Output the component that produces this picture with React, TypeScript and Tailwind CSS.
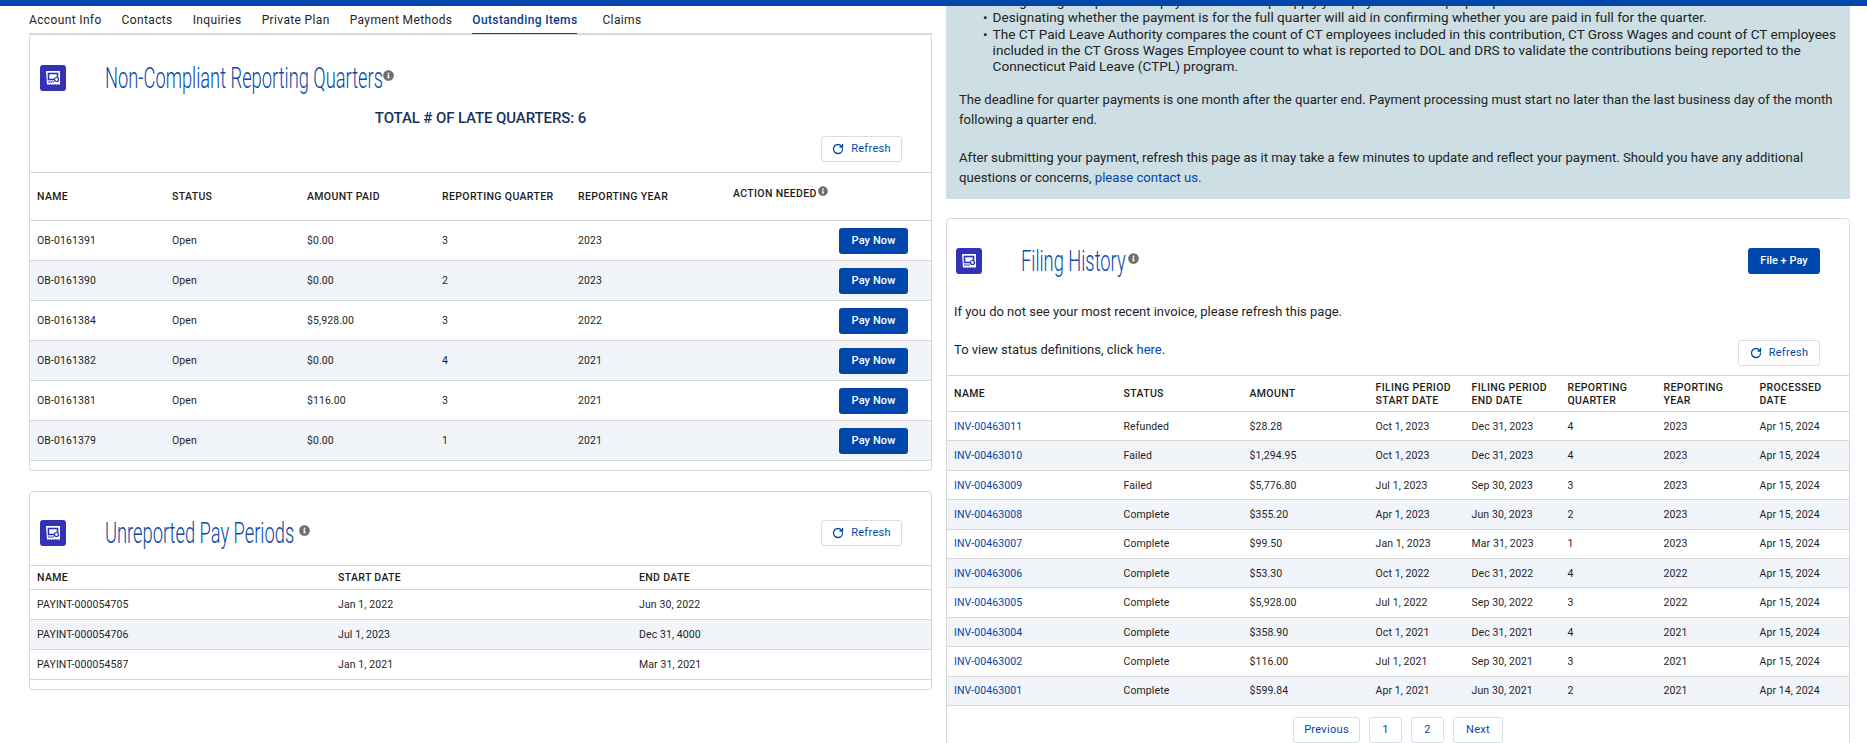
import { RotateCw } from "lucide-react";
import { FaInfoCircle } from "react-icons/fa";

const tabs = ["Account Info", "Contacts", "Inquiries", "Private Plan", "Payment Methods"];

const lateQuarters = [
  ["OB-0161391", "Open", "$0.00", "3", "2023"],
  ["OB-0161390", "Open", "$0.00", "2", "2023"],
  ["OB-0161384", "Open", "$5,928.00", "3", "2022"],
  ["OB-0161382", "Open", "$0.00", "4", "2021"],
  ["OB-0161381", "Open", "$116.00", "3", "2021"],
  ["OB-0161379", "Open", "$0.00", "1", "2021"],
];

const payPeriods = [
  ["PAYINT-000054705", "Jan 1, 2022", "Jun 30, 2022"],
  ["PAYINT-000054706", "Jul 1, 2023", "Dec 31, 4000"],
  ["PAYINT-000054587", "Jan 1, 2021", "Mar 31, 2021"],
];

const invoices = [
  ["INV-00463011", "Refunded", "$28.28", "Oct 1, 2023", "Dec 31, 2023", "4", "2023", "Apr 15, 2024"],
  ["INV-00463010", "Failed", "$1,294.95", "Oct 1, 2023", "Dec 31, 2023", "4", "2023", "Apr 15, 2024"],
  ["INV-00463009", "Failed", "$5,776.80", "Jul 1, 2023", "Sep 30, 2023", "3", "2023", "Apr 15, 2024"],
  ["INV-00463008", "Complete", "$355.20", "Apr 1, 2023", "Jun 30, 2023", "2", "2023", "Apr 15, 2024"],
  ["INV-00463007", "Complete", "$99.50", "Jan 1, 2023", "Mar 31, 2023", "1", "2023", "Apr 15, 2024"],
  ["INV-00463006", "Complete", "$53.30", "Oct 1, 2022", "Dec 31, 2022", "4", "2022", "Apr 15, 2024"],
  ["INV-00463005", "Complete", "$5,928.00", "Jul 1, 2022", "Sep 30, 2022", "3", "2022", "Apr 15, 2024"],
  ["INV-00463004", "Complete", "$358.90", "Oct 1, 2021", "Dec 31, 2021", "4", "2021", "Apr 15, 2024"],
  ["INV-00463002", "Complete", "$116.00", "Jul 1, 2021", "Sep 30, 2021", "3", "2021", "Apr 15, 2024"],
  ["INV-00463001", "Complete", "$599.84", "Apr 1, 2021", "Jun 30, 2021", "2", "2021", "Apr 14, 2024"],
];

const CardIcon = () => (
  <svg width="26" height="26" viewBox="0 0 26 26" className="shrink-0">
    <rect width="26" height="26" rx="3" fill="#3232b4" />
    <path
      d="M6 6h14v13l-1.2 1-1.2-1-1.2 1-1.2-1-1.2 1-1.2-1-1.2 1-1.2-1-1.2 1-1.2-1-1 1z"
      fill="#fff"
    />
    <rect x="8.5" y="8.5" width="9" height="6" fill="none" stroke="#3232b4" strokeWidth="1.6" />
    <circle cx="16.5" cy="14.5" r="2" fill="#fff" stroke="#3232b4" strokeWidth="1.2" />
    <path d="M8 17h6" stroke="#3232b4" strokeWidth="1" />
  </svg>
);

const Info = ({ size = 11 }: { size?: number }) => (
  <FaInfoCircle size={size} className="shrink-0 text-[#706e6b]" />
);

const Title = ({ text, widthClass }: { text: string; widthClass: string }) => (
  <div className="flex items-start">
    <div className={`${widthClass} h-[34px] overflow-visible`}>
      <h2 className="origin-left scale-x-[0.61] whitespace-nowrap font-['Roboto'] text-[30px] leading-[34px] font-light text-[#0b4aa8]">
        {text}
      </h2>
    </div>
    <span className="mt-[9px] ml-[2px]">
      <Info />
    </span>
  </div>
);

const RefreshButton = () => (
  <button className="flex h-[26px] w-[81px] items-center justify-center gap-[7px] rounded-[3px] border border-[#d8dde6] bg-white text-[11px] tracking-[0.3px] text-[#0047ab]">
    <RotateCw size={12} strokeWidth={2.6} />
    Refresh
  </button>
);

const PageButton = ({ label, widthClass }: { label: string; widthClass: string }) => (
  <button className={`${widthClass} h-[26px] rounded-[3px] border border-[#d8dde6] bg-white text-[11px] tracking-[0.3px] text-[#0047ab]`}>
    {label}
  </button>
);

const headCell = "text-[10.5px] font-medium tracking-[0.35px] uppercase text-[#1c1c1c]";

export default function App() {
  return (
    <div className="h-[743px] w-[1867px] overflow-hidden bg-white font-['Roboto',sans-serif] text-[#1f1f1f]">
      <div className="relative z-10 h-[6px] bg-[#0047ab]" />
      <div className="flex items-start pl-[29px]">
        {/* left column */}
        <div className="w-[903px] shrink-0">
          <div className="flex h-[29px] border-b-2 border-[#d8d8d8] text-[12px] tracking-[0.36px]">
            {tabs.map((tab) => (
              <div key={tab} className="mr-[20px] flex h-[28px] items-center text-[#1f1f1f]">
                {tab}
              </div>
            ))}
            <div className="mr-[25px] flex h-[28px] items-center border-b border-[#0047ab] font-medium text-[#0a3a8c]">
              Outstanding Items
            </div>
            <div className="flex h-[28px] items-center">Claims</div>
          </div>

          <section className="rounded-[4px] border border-t-0 border-[#d8d8d8] pb-[9px]">
            <div className="flex items-center pt-[26px] pl-[10px]">
              <CardIcon />
              <div className="ml-[39px]">
                <Title text="Non-Compliant Reporting Quarters" widthClass="w-[276px]" />
              </div>
            </div>
            <p className="mt-[13px] text-center text-[15px] leading-[20px] font-medium tracking-[-0.1px] text-[#16325c]">
              TOTAL # OF LATE QUARTERS: 6
            </p>
            <div className="mt-[8px] mb-[10px] flex justify-end pr-[29px]">
              <RefreshButton />
            </div>
            <div className="grid h-[49px] grid-cols-[135px_135px_135px_136px_155px_1fr] items-center border-y border-[#d8d8d8] pl-[7px]">
              <span className={headCell}>Name</span>
              <span className={headCell}>Status</span>
              <span className={headCell}>Amount Paid</span>
              <span className={headCell}>Reporting Quarter</span>
              <span className={headCell}>Reporting Year</span>
              <span className={`${headCell} -mt-[6px] flex items-start gap-[1px]`}>
                Action Needed
                <Info size={10} />
              </span>
            </div>
            {lateQuarters.map((row, idx) => (
              <div
                key={row[0]}
                className={`grid h-[40px] grid-cols-[135px_135px_135px_136px_1fr_69px] items-center border-b border-[#d8d8d8] pt-px pr-[23px] pl-[7px] text-[10.5px] tracking-[0.1px] ${idx % 2 === 1 ? "bg-[#f1f4f9]" : "bg-white"}`}
              >
                {row.map((cell, i) => (
                  <span key={i}>{cell}</span>
                ))}
                <button className="h-[26px] rounded-[3px] bg-[#0047ab] text-[11px] font-medium text-white">
                  Pay Now
                </button>
              </div>
            ))}
          </section>

          <section className="mt-[20px] rounded-[4px] border border-[#d8d8d8] pb-[9px]">
            <div className="flex items-center justify-between pt-[24px] pr-[29px] pb-[15px] pl-[10px]">
              <div className="flex items-center">
                <CardIcon />
                <div className="ml-[39px]">
                  <Title text="Unreported Pay Periods" widthClass="w-[192px]" />
                </div>
              </div>
              <RefreshButton />
            </div>
            <div className="grid h-[25px] grid-cols-[301px_301px_1fr] items-center border-y border-[#d8d8d8] pl-[7px]">
              <span className={headCell}>Name</span>
              <span className={headCell}>Start Date</span>
              <span className={headCell}>End Date</span>
            </div>
            {payPeriods.map((row, idx) => (
              <div
                key={row[0]}
                className={`grid h-[30px] grid-cols-[301px_301px_1fr] items-center border-b border-[#d8d8d8] pl-[7px] text-[10.5px] tracking-[0.1px] ${idx === 1 ? "bg-[#f1f4f9]" : "bg-white"}`}
              >
                {row.map((cell, i) => (
                  <span key={i}>{cell}</span>
                ))}
              </div>
            ))}
          </section>
        </div>

        {/* right column */}
        <div className="ml-[14px] w-[904px] shrink-0">
          <div className="-mt-[13px] h-[206px] bg-[#cddfe4] px-[13px] text-[#232323]">
            <ul className="pl-[24px] text-[13.6px] leading-[16.3px]">
              <li className="flex gap-[5px]">
                <span>•</span>
                <span>Designating the quarter the payment is for helps apply your payment to the proper quarter.</span>
              </li>
              <li className="flex gap-[5px]">
                <span>•</span>
                <span>Designating whether the payment is for the full quarter will aid in confirming whether you are paid in full for the quarter.</span>
              </li>
              <li className="flex gap-[5px]">
                <span>•</span>
                <span>
                  The CT Paid Leave Authority compares the count of CT employees included in this contribution, CT Gross Wages and count of CT employees
                  included in the CT Gross Wages Employee count to what is reported to DOL and DRS to validate the contributions being reported to the
                  Connecticut Paid Leave (CTPL) program.
                </span>
              </li>
            </ul>
            <p className="mt-[16px] text-[13.15px] leading-[19.5px]">
              The deadline for quarter payments is one month after the quarter end. Payment processing must start no later than the last business day of the month
              following a quarter end.
            </p>
            <p className="mt-[19px] text-[13.15px] leading-[19.5px]">
              After submitting your payment, refresh this page as it may take a few minutes to update and reflect your payment. Should you have any additional
              questions or concerns, <span className="text-[#0047ab]">please contact us.</span>
            </p>
          </div>

          <section className="mt-[19px] rounded-[4px] border border-[#d8d8d8] pb-[11px]">
            <div className="flex items-center justify-between pt-[25px] pr-[29px] pl-[9px]">
              <div className="flex items-center">
                <CardIcon />
                <div className="ml-[39px]">
                  <Title text="Filing History" widthClass="w-[105px]" />
                </div>
              </div>
              <button className="h-[26px] w-[72px] rounded-[3px] bg-[#0047ab] text-[11px] font-medium text-white">
                File + Pay
              </button>
            </div>
            <p className="mt-[24px] pl-[7px] text-[13px] leading-[20px]">
              If you do not see your most recent invoice, please refresh this page.
            </p>
            <div className="mt-[18px] mb-[9px] flex items-start justify-between pr-[29px] pl-[7px]">
              <p className="text-[13px] leading-[20px]">
                To view status definitions, click <span className="text-[#0047ab]">here</span>.
              </p>
              <button className="flex h-[26px] w-[82px] items-center justify-center gap-[7px] rounded-[3px] border border-[#d8dde6] bg-white text-[11px] tracking-[0.3px] text-[#0047ab]">
                <RotateCw size={12} strokeWidth={2.6} />
                Refresh
              </button>
            </div>
            <div className="grid h-[37px] grid-cols-[169.5px_126px_126px_96px_96px_96px_96px_1fr] items-center border-y border-[#d8d8d8] pl-[7px] leading-[13px]">
              <span className={headCell}>Name</span>
              <span className={headCell}>Status</span>
              <span className={headCell}>Amount</span>
              <span className={headCell}>Filing Period<br />Start Date</span>
              <span className={headCell}>Filing Period<br />End Date</span>
              <span className={headCell}>Reporting<br />Quarter</span>
              <span className={headCell}>Reporting<br />Year</span>
              <span className={headCell}>Processed<br />Date</span>
            </div>
            {invoices.map((row, idx) => (
              <div
                key={row[0]}
                className={`grid h-[29.4px] grid-cols-[169.5px_126px_126px_96px_96px_96px_96px_1fr] items-center border-b border-[#d8d8d8] pt-px pl-[7px] text-[10.5px] tracking-[0.1px] ${idx % 2 === 1 ? "bg-[#f1f4f9]" : "bg-white"}`}
              >
                {row.map((cell, i) => (
                  <span key={i} className={i === 0 ? "text-[#0047ab]" : ""}>
                    {cell}
                  </span>
                ))}
              </div>
            ))}
            <div className="mt-[11px] flex justify-center gap-[9px]">
              <PageButton label="Previous" widthClass="w-[67px]" />
              <PageButton label="1" widthClass="w-[33px]" />
              <PageButton label="2" widthClass="w-[33px]" />
              <PageButton label="Next" widthClass="w-[50px]" />
            </div>
          </section>
        </div>
      </div>
    </div>
  );
}
